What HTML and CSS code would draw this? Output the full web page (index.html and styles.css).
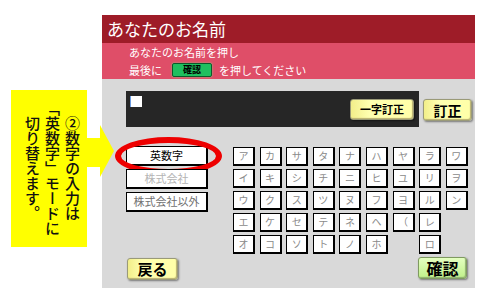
FILE: index.html
```html
<!DOCTYPE html>
<html lang="ja">
<head>
<meta charset="UTF-8">
<meta name="viewport" content="width=device-width, initial-scale=1.0">
<title>あなたのお名前</title>
<link rel="stylesheet" href="styles.css">
</head>
<body>

<div class="page">
    <div class="callout">
        <p class="callout-text">②数字の入力は<br>「英数字」モードに<br>切り替えます。</p>
        <svg class="callout-arrow" width="27" height="52" viewBox="0 0 27 52">
            <polygon points="0,13 13,13 13,0 27,26 13,52 13,42 0,42" fill="#ffff00"/>
        </svg>
    </div>

    <div class="panel">
        <h1 class="panel-title">あなたのお名前</h1>
        <div class="panel-guide">
            <p>あなたのお名前を押し</p>
            <p>最後に<span class="mini-ok">確認</span>を押してください</p>
        </div>

        <div class="panel-body">
            <div class="input-row">
                <div class="name-field">
                    <span class="cursor-box"></span>
                    <button class="btn-yellow btn-one">一字訂正</button>
                </div>
                <button class="btn-yellow btn-fix">訂正</button>
            </div>

            <div class="pick-row">
                <div class="modes">
                    <div class="mode mode-on">英数字<span class="ring"></span></div>
                    <div class="mode mode-off">株式会社</div>
                    <div class="mode mode-other">株式会社以外</div>
                </div>
                <div class="kana-grid">
                    <div class="kana">ア</div><div class="kana">カ</div><div class="kana">サ</div><div class="kana">タ</div><div class="kana">ナ</div><div class="kana">ハ</div><div class="kana">ヤ</div><div class="kana">ラ</div><div class="kana">ワ</div>
                    <div class="kana">イ</div><div class="kana">キ</div><div class="kana">シ</div><div class="kana">チ</div><div class="kana">ニ</div><div class="kana">ヒ</div><div class="kana">ユ</div><div class="kana">リ</div><div class="kana">ヲ</div>
                    <div class="kana">ウ</div><div class="kana">ク</div><div class="kana">ス</div><div class="kana">ツ</div><div class="kana">ヌ</div><div class="kana">フ</div><div class="kana">ヨ</div><div class="kana">ル</div><div class="kana">ン</div>
                    <div class="kana">エ</div><div class="kana">ケ</div><div class="kana">セ</div><div class="kana">テ</div><div class="kana">ネ</div><div class="kana">ヘ</div><div class="kana">（</div><div class="kana">レ</div><div class="kana kana-gap"></div>
                    <div class="kana">オ</div><div class="kana">コ</div><div class="kana">ソ</div><div class="kana">ト</div><div class="kana">ノ</div><div class="kana">ホ</div><div class="kana kana-gap"></div><div class="kana">ロ</div><div class="kana kana-gap"></div>
                </div>
            </div>

            <div class="foot-row">
                <button class="btn-yellow btn-back">戻る</button>
                <button class="btn-green">確認</button>
            </div>
        </div>
    </div>
</div>

</body>
</html>
```

FILE: styles.css
```css
body {
    margin: 0;
    padding: 0;
    background: #fff;
    font-family: "Noto Sans CJK JP", "DejaVu Sans", sans-serif;
}
.page {
    display: flex;
    align-items: flex-start;
    height: 288px;
    overflow: hidden;
}

/* yellow note on the left */
.callout {
    position: relative;
    z-index: 2;
    width: 76px;
    height: 157px;
    margin: 90px 0 0 11px;
    background: #ffff00;
}
.callout-text {
    margin: 0;
    width: 76px;
    height: 157px;
    padding-right: 5px;
    box-sizing: border-box;
    writing-mode: vertical-rl;
    text-align: center;
    font-size: 15px;
    line-height: 20px;
    font-weight: 500;
    color: #111;
}
.callout-arrow {
    position: absolute;
    left: 76px;
    top: 35px;
}

/* screen panel */
.panel {
    display: flex;
    flex-direction: column;
    width: 373px;
    height: 273px;
    margin: 15px 0 0 15px;
    background: #d9d9d9;
}
.panel-title {
    margin: 0;
    height: 28px;
    padding-left: 5px;
    background: #9e1c28;
    color: #fff;
    font-size: 17px;
    font-weight: normal;
    line-height: 28px;
}
.panel-guide {
    height: 36px;
    padding-left: 27px;
    background: #df4e68;
    color: #fff;
    font-size: 11px;
}
.panel-guide p {
    margin: 0;
    height: 18px;
    line-height: 18px;
    display: flex;
    align-items: center;
}
.mini-ok {
    display: inline-block;
    width: 40px;
    height: 14px;
    margin: 0 7px 0 10px;
    background: #1fbf5f;
    border: 1px solid #0b5a2a;
    border-radius: 2px;
    box-shadow: 0 0 2px #8fd08f;
    box-sizing: border-box;
    color: #000;
    font-size: 9px;
    font-weight: bold;
    line-height: 12px;
    text-align: center;
}

.panel-body {
    flex: 1;
    display: flex;
    flex-direction: column;
}

/* input line */
.input-row {
    display: flex;
    align-items: center;
    margin-top: 12px;
    padding-left: 24px;
}
.name-field {
    display: flex;
    justify-content: space-between;
    align-items: center;
    width: 293px;
    height: 36px;
    padding: 0 5px 0 4px;
    box-sizing: border-box;
    background: #262626;
}
.cursor-box {
    align-self: flex-start;
    width: 11px;
    height: 11px;
    margin-top: 5px;
    background: #fff;
    border-left: 1px solid #6a9ae0;
}
.btn-yellow {
    padding: 0;
    background: linear-gradient(to right, #f2ee8a, #ffffb0 30%, #ffffa8);
    border: 1px solid #9a9a78;
    border-radius: 3px;
    box-shadow: inset -1px -1px 1px #b8b070, 1px 1px 2px rgba(0, 0, 0, 0.45);
    color: #000;
    font-family: "Noto Sans CJK JP", "DejaVu Sans", sans-serif;
    font-weight: bold;
    cursor: pointer;
}
.btn-one {
    width: 64px;
    height: 21px;
    margin-top: 1px;
    font-size: 11px;
    line-height: 19px;
}
.btn-fix {
    width: 49px;
    height: 22px;
    margin: 2px 0 0 4px;
    font-size: 14px;
    line-height: 20px;
}

/* mode buttons and kana keys */
.pick-row {
    display: flex;
    align-items: flex-start;
    margin-top: 19px;
    padding-left: 24px;
}
.modes {
    display: flex;
    flex-direction: column;
    gap: 3px;
    width: 82px;
}
.mode,
.kana {
    background: #fff;
    border: 1px solid #000;
    border-right-width: 2px;
    border-bottom-width: 2px;
    box-sizing: border-box;
    text-align: center;
}
.mode {
    position: relative;
    height: 20px;
    font-size: 11px;
    line-height: 17px;
}
.mode-on {
    color: #000;
}
.mode-off {
    color: #b4b4b4;
}
.mode-other {
    color: #707070;
}
.ring {
    position: absolute;
    left: -12px;
    top: -10px;
    width: 107px;
    height: 38px;
    border: 6px solid #ee0000;
    border-radius: 50%;
    box-sizing: border-box;
}
.kana-grid {
    display: grid;
    grid-template-columns: repeat(9, 22px);
    grid-auto-rows: 19px;
    column-gap: 4.6px;
    row-gap: 3px;
    margin: 1px 0 0 25px;
}
.kana {
    color: #8a8a8a;
    font-size: 10px;
    line-height: 16px;
}
.kana-gap {
    visibility: hidden;
}

/* bottom buttons */
.foot-row {
    display: flex;
    justify-content: space-between;
    align-items: flex-start;
    margin-top: 3px;
    padding: 0 8px 0 25px;
}
.btn-back {
    width: 51px;
    height: 22px;
    margin-top: 1px;
    font-size: 15px;
    line-height: 20px;
}
.btn-green {
    width: 49px;
    height: 22px;
    padding: 0;
    background: linear-gradient(#e4ffc0, #c0f08a);
    border: 1px solid #7f9a60;
    border-radius: 3px;
    box-shadow: inset -1px -1px 1px #90b070, 1px 1px 2px rgba(0, 0, 0, 0.45);
    color: #000;
    font-family: "Noto Sans CJK JP", "DejaVu Sans", sans-serif;
    font-size: 16px;
    font-weight: bold;
    line-height: 20px;
    cursor: pointer;
}
```
